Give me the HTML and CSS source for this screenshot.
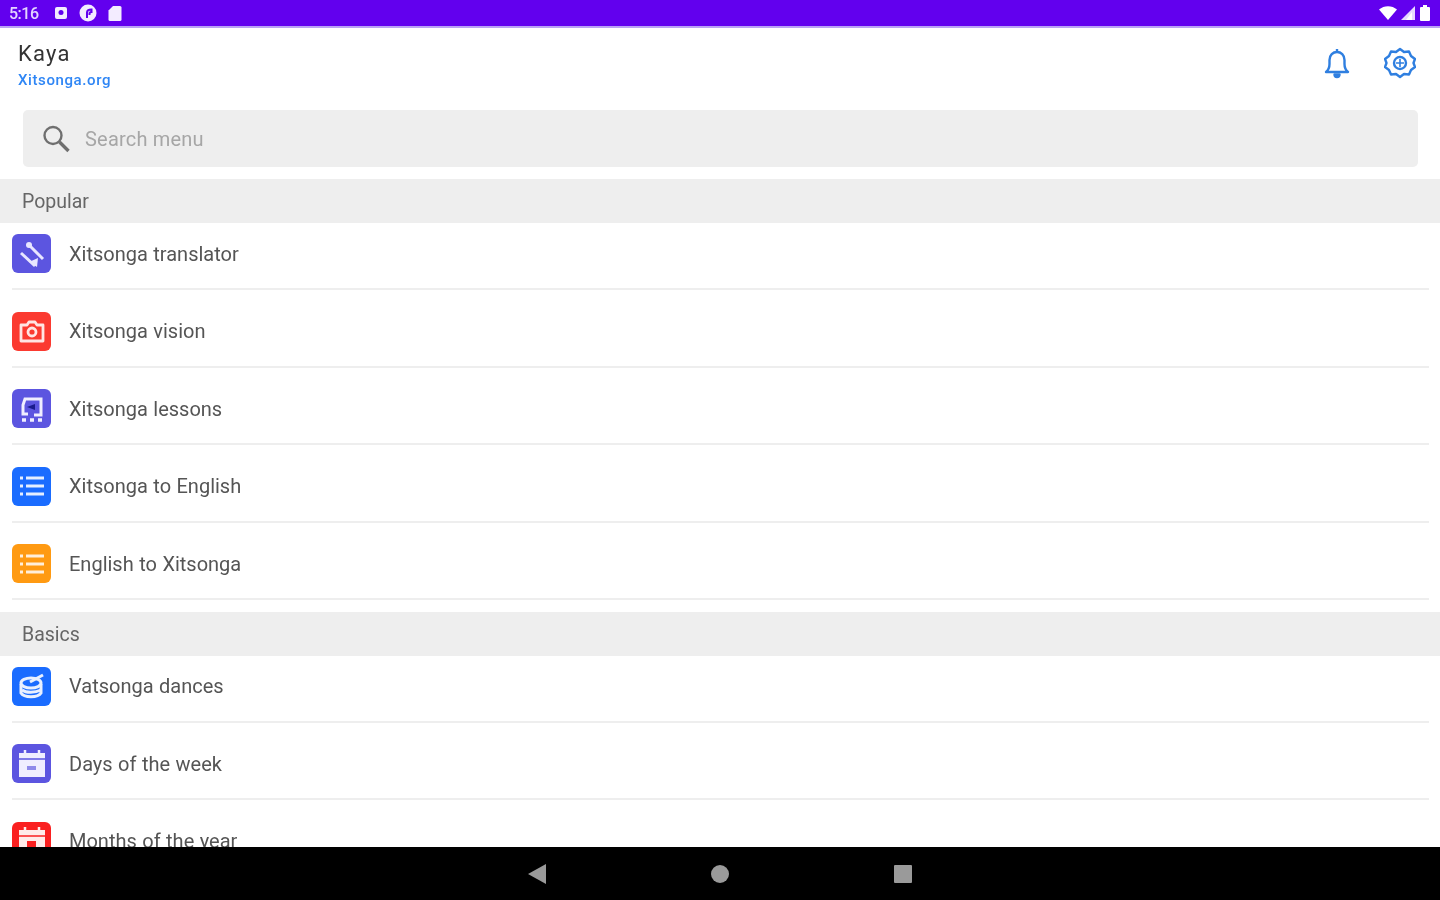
FILE: index.html
```html
<!DOCTYPE html>
<html lang="en">
<head>
  <meta charset="UTF-8" />
  <meta name="viewport" content="width=device-width, initial-scale=1.0"/>
  <title>Kaya</title>
  <link rel="stylesheet" href="styles.css">
</head>
<body>
  <div class="app">
    <div class="status-bar">
      <div class="status-left soft">
        <span class="clock">5:16</span>
        <svg class="status-icon" width="14" height="14" viewBox="0 0 14 14"><rect x="1" y="1" width="12" height="12" rx="2" fill="#f3ecff"/><circle cx="7" cy="6.500" r="2.500" fill="#6200ee"/></svg>
        <svg class="status-icon" width="18" height="18" viewBox="0 0 18 18"><circle cx="9" cy="9" r="8.500" fill="#f3ecff"/><path d="M8 14V8.500C8 6.500 9.500 5.500 12.500 5.500V8C11 8 10.500 8.500 10.500 9.500V11" fill="none" stroke="#6200ee" stroke-width="2"/></svg>
        <svg class="status-icon" width="14" height="16" viewBox="0 0 14 16"><path d="M5 1h7a1.500 1.500 0 0 1 1.500 1.500v12A1.500 1.500 0 0 1 12 16H2a1.500 1.500 0 0 1-1.500-1.500V5.500z" fill="#f3ecff"/></svg>
      </div>
      <div class="status-right soft">
        <svg width="18" height="14" viewBox="0 0 18 14"><path d="M0 3.500C5-1 13-1 18 3.500L9 14z" fill="#fff"/></svg>
        <svg width="15" height="14" viewBox="0 0 15 14"><path d="M14 0v14H0z" fill="#e6d8ff"/><path d="M11 6v8H5z" fill="#fff"/></svg>
        <svg width="10" height="16" viewBox="0 0 10 16"><path d="M3 0h4v2h2a1 1 0 0 1 1 1v12a1 1 0 0 1-1 1H1a1 1 0 0 1-1-1V3a1 1 0 0 1 1-1h2z" fill="#fff"/></svg>
      </div>
    </div>

    <header class="top-bar">
      <div class="brand soft">
        <div class="brand-name">Kaya</div>
        <div class="brand-link">Xitsonga.org</div>
      </div>
      <div class="top-actions soft">
        <svg width="28" height="32" viewBox="0 0 28 32" fill="none" stroke="#2f7fe0" stroke-width="2.400" stroke-linejoin="round"><path d="M3 25c2.500-2 3.500-4 3.500-8v-4C6.500 8 10 5 14 5s7.500 3 7.500 8v4c0 4 1 6 3.500 8z"/><path d="M14 2v3"/><path d="M11.500 27.500a2.500 2.500 0 0 0 5 0z" fill="#2f7fe0"/></svg>
        <svg width="32" height="32" viewBox="0 0 32 32" fill="none" stroke="#2f7fe0" stroke-width="2.400" stroke-linejoin="round"><path d="M16 2l4 3 5-.5 2 4.500 4 3-1.500 4 1.500 4-4 3-2 4.500-5-.5-4 3-4-3-5 .5-2-4.500-4-3 1.500-4L1 12l4-3 2-4.500 5 .5z"/><circle cx="16" cy="16" r="6"/><path d="M16 12v8M12 16h8" stroke-width="1.600"/></svg>
      </div>
    </header>

    <div class="search-wrap">
      <div class="search-box">
        <svg class="soft" width="30" height="30" viewBox="0 0 30 30" fill="none" stroke="#6f6f6f"><circle cx="12" cy="11.500" r="8.500" stroke-width="2.400"/><path d="M18.500 18l9 9" stroke-width="3.400"/></svg>
        <span class="search-text soft">Search menu</span>
      </div>
    </div>

    <main class="content">
      <div class="section-title"><span class="soft">Popular</span></div>
      <ul class="menu-list">
        <li class="menu-row">
          <span class="menu-icon indigo soft">
            <svg width="28" height="28" viewBox="0 0 28 28" fill="none" stroke="#e8e6ff" stroke-width="3"><path d="M11 5l14 14"/><path d="M3 13l14 13"/><circle cx="11" cy="5" r="3" fill="#e8e6ff" stroke="none"/><path d="M19 27l1-9-9 4z" fill="#e8e6ff" stroke="none"/></svg>
          </span>
          <span class="menu-label soft">Xitsonga translator</span>
        </li>
        <li class="menu-row">
          <span class="menu-icon red soft">
            <svg width="28" height="28" viewBox="0 0 28 28" fill="none" stroke="#ffe5e3" stroke-width="2.800"><path d="M3 8h6l2-3h6l2 3h6v16H3z" stroke-linejoin="round"/><circle cx="14" cy="15" r="4"/></svg>
          </span>
          <span class="menu-label soft">Xitsonga vision</span>
        </li>
        <li class="menu-row">
          <span class="menu-icon indigo soft">
            <svg width="28" height="28" viewBox="0 0 28 28" fill="none" stroke="#f0eeff" stroke-width="3"><path d="M13 4H7L5 10v9h5"/><path d="M13 4h10v16h-7"/><path d="M9 12l8-3v6z" fill="#1a1a8c" stroke="none"/><path d="M4 25h4M12 25h4M20 25h4" stroke-width="3.500"/></svg>
          </span>
          <span class="menu-label soft">Xitsonga lessons</span>
        </li>
        <li class="menu-row">
          <span class="menu-icon blue soft">
            <svg width="28" height="28" viewBox="0 0 28 28" fill="none" stroke="#e4eeff" stroke-width="3"><path d="M8 6h18M8 14h18M8 22h18"/><path d="M2 6h3M2 14h3M2 22h3"/></svg>
          </span>
          <span class="menu-label soft">Xitsonga to English</span>
        </li>
        <li class="menu-row">
          <span class="menu-icon orange soft">
            <svg width="28" height="28" viewBox="0 0 28 28" fill="none" stroke="#ffeeda" stroke-width="3"><path d="M8 6h18M8 14h18M8 22h18"/><path d="M2 6h3M2 14h3M2 22h3"/></svg>
          </span>
          <span class="menu-label soft">English to Xitsonga</span>
        </li>
      </ul>

      <div class="section-title"><span class="soft">Basics</span></div>
      <ul class="menu-list">
        <li class="menu-row">
          <span class="menu-icon blue soft">
            <svg width="28" height="28" viewBox="0 0 28 28" fill="none" stroke="#e8f0ff" stroke-width="3"><ellipse cx="13" cy="11" rx="10" ry="5"/><path d="M3 12v9c3 5 17 5 20 0v-9"/><path d="M4 18c4 3 13 3 19 0"/><path d="M12 10L25 3"/></svg>
          </span>
          <span class="menu-label soft">Vatsonga dances</span>
        </li>
        <li class="menu-row">
          <span class="menu-icon indigo soft">
            <svg width="30" height="30" viewBox="0 0 30 30"><path d="M2 4h26v24H2z" fill="#f0eeff"/><path d="M2 10h26" stroke="#5c55e0" stroke-width="1.500"/><path d="M8 1v5M22 1v5" stroke="#f0eeff" stroke-width="2.500"/><path d="M10 17h9v4h-9z" fill="#8f8aea"/></svg>
          </span>
          <span class="menu-label soft">Days of the week</span>
        </li>
        <li class="menu-row">
          <span class="menu-icon bright-red soft">
            <svg width="30" height="30" viewBox="0 0 30 30"><path d="M2 4h26v24H2z" fill="#ffecea"/><path d="M2 10h26" stroke="#fa2020" stroke-width="1.500"/><path d="M8 1v5M22 1v5" stroke="#ffecea" stroke-width="2.500"/><path d="M10 15h9v7h-9z" fill="#fa2020"/></svg>
          </span>
          <span class="menu-label soft">Months of the year</span>
        </li>
      </ul>
    </main>

    <nav class="nav-bar">
      <svg class="soft" width="18" height="20" viewBox="0 0 18 20"><path d="M18 0v20L0 10z" fill="#9a9a9a"/></svg>
      <svg class="soft" width="18" height="18" viewBox="0 0 18 18"><circle cx="9" cy="9" r="9" fill="#9a9a9a"/></svg>
      <svg class="soft" width="18" height="18" viewBox="0 0 18 18"><rect width="18" height="18" rx="1" fill="#9a9a9a"/></svg>
    </nav>
  </div>
</body>
</html>
```

FILE: styles.css
```css
body {
  margin: 0;
  background-color: #fff;
  font-family: Roboto, "Liberation Sans", sans-serif;
  overflow: hidden;
}

.app {
  display: flex;
  flex-direction: column;
  height: 100vh;
}

/* the screenshot is an upscaled phone capture, text and icons are a bit soft */
.soft {
  filter: blur(0.6px);
}

.status-bar {
  display: flex;
  justify-content: space-between;
  align-items: center;
  flex-shrink: 0;
  height: 26px;
  padding: 0 10px 0 9px;
  background-color: #6200ee;
  border-bottom: 2px solid #b9a2f5;
}

.status-left {
  display: flex;
  align-items: center;
}

.clock {
  width: 45px;
  color: #e4d4ff;
  font-size: 16px;
  font-weight: 500;
  letter-spacing: -0.5px;
}

.status-icon {
  margin-right: 11px;
}

.status-right {
  display: flex;
  align-items: center;
  gap: 4px;
}

.top-bar {
  display: flex;
  justify-content: space-between;
  flex-shrink: 0;
  height: 82px;
  padding: 0 24px 0 18px;
}

.brand {
  padding-top: 13px;
}

.brand-name {
  color: #333;
  font-size: 22px;
  letter-spacing: 1.2px;
  line-height: 26px;
}

.brand-link {
  margin-top: 4px;
  color: #2f86f5;
  font-size: 15px;
  font-weight: 500;
  letter-spacing: 0.6px;
  line-height: 18px;
}

.top-actions {
  display: flex;
  align-items: flex-start;
  gap: 33px;
  padding-top: 19px;
}

.search-wrap {
  flex-shrink: 0;
  padding: 0 22px 12px 23px;
}

.search-box {
  display: flex;
  align-items: center;
  gap: 14px;
  height: 57px;
  padding-left: 18px;
  background-color: #eeeeee;
  border-radius: 5px;
}

.search-text {
  color: #a6a6a6;
  font-size: 20px;
  letter-spacing: 0.2px;
}

.content {
  flex: 1;
  overflow: hidden;
}

.section-title {
  display: flex;
  align-items: center;
  box-sizing: border-box;
  height: 44px;
  padding: 1px 0 0 22px;
  background-color: #eeeeee;
  color: #666;
  font-size: 19.500px;
}

.menu-list {
  display: flex;
  flex-direction: column;
  gap: 11px;
  margin: 0 11px 12px 12px;
  padding: 0;
  list-style: none;
}

.menu-row {
  display: flex;
  align-items: center;
  gap: 18px;
  padding: 11px 0 15px;
  border-bottom: 2px solid #eeeeee;
  margin-bottom: -0.500px;
}

.menu-icon {
  display: flex;
  justify-content: center;
  align-items: center;
  width: 39px;
  height: 39px;
  border-radius: 6px;
}

.indigo {
  background-color: #5c55e0;
}

.red {
  background-color: #fb3a30;
}

.bright-red {
  background-color: #fa2020;
}

.blue {
  background-color: #1a6cff;
}

.orange {
  background-color: #ff9a12;
}

.menu-label {
  color: #555;
  font-size: 20px;
  word-spacing: 0.5px;
}

.nav-bar {
  display: flex;
  justify-content: center;
  align-items: center;
  gap: 165px;
  flex-shrink: 0;
  height: 53px;
  background-color: #000;
}
```
